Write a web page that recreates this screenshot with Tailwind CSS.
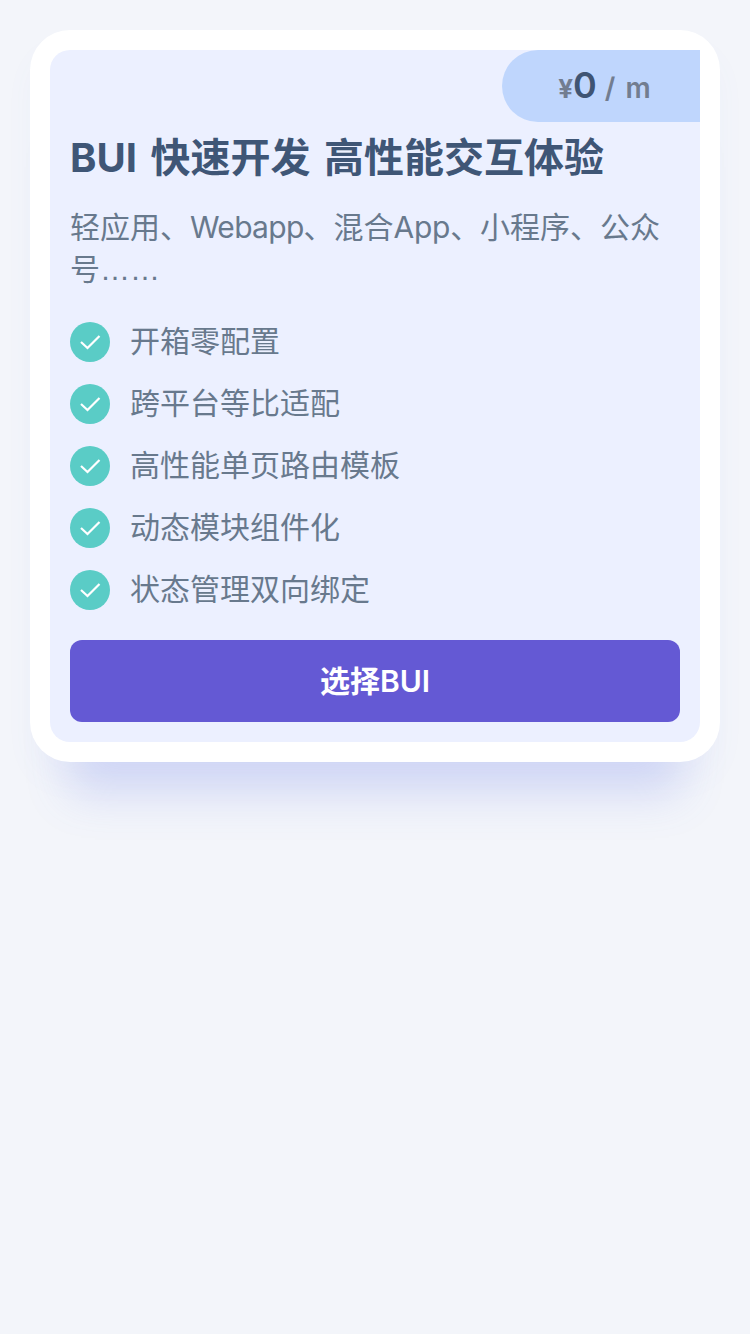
<!DOCTYPE html>
<html lang="zh">
<head>
<meta charset="utf-8">
<script src="https://cdn.jsdelivr.net/npm/@tailwindcss/browser@4"></script>
</head>
<body class="bg-[#f3f5fa] font-['Inter','Noto_Sans_CJK_SC',sans-serif]">
<div class="h-[1334px] w-[750px] pt-[30px] pl-[30px]">
  <div class="w-[690px] rounded-[40px] bg-white p-5 shadow-[0_72px_42px_-40px_rgba(100,116,230,0.21),0_20px_30px_rgba(100,116,230,0.04)]">
    <div class="overflow-hidden rounded-[20px] rounded-tr-none bg-[#ecf0ff]">
      <div class="flex justify-end">
        <div class="flex h-[72px] w-[198px] items-center justify-center rounded-l-full bg-[#bfd6fd] pl-[7px] text-[#727d90]">
          <span class="mt-1 text-[26px] font-bold">¥</span><span class="pb-[2px] text-[36px] leading-none font-semibold text-[#3f5473]">0</span><span class="mt-1 ml-2 text-[28px] font-semibold [word-spacing:3px]">/ m</span>
        </div>
      </div>
      <div class="px-5 pb-5">
        <h1 class="mt-2 text-[40px] leading-[56px] font-bold text-[#3f5676] [word-spacing:4px]">BUI 快速开发 高性能交互体验</h1>
        <p class="mt-[20px] text-[30px] leading-[42px] text-[#68798d]">轻应用、<span class="tracking-[-0.7px]">Webapp</span>、混合<span class="tracking-[-0.3px]">App</span>、小程序、公众号<span class="font-['Liberation_Sans'] leading-none">……</span></p>
        <ul class="mt-[32px] flex flex-col gap-[22px] text-[30px] leading-[40px] text-[#68798d]">
          <li class="flex items-center gap-5"><svg class="size-10" viewBox="0 0 40 40"><circle cx="20" cy="20" r="20" fill="#5accc6"/><path d="M11 20 17.5 26 29.5 14" fill="none" stroke="#fff" stroke-width="2.2"/></svg><span class="pb-[2px] leading-[38px]">开箱零配置</span></li>
          <li class="flex items-center gap-5"><svg class="size-10" viewBox="0 0 40 40"><circle cx="20" cy="20" r="20" fill="#5accc6"/><path d="M11 20 17.5 26 29.5 14" fill="none" stroke="#fff" stroke-width="2.2"/></svg><span class="pb-[2px] leading-[38px]">跨平台等比适配</span></li>
          <li class="flex items-center gap-5"><svg class="size-10" viewBox="0 0 40 40"><circle cx="20" cy="20" r="20" fill="#5accc6"/><path d="M11 20 17.5 26 29.5 14" fill="none" stroke="#fff" stroke-width="2.2"/></svg><span class="pb-[2px] leading-[38px]">高性能单页路由模板</span></li>
          <li class="flex items-center gap-5"><svg class="size-10" viewBox="0 0 40 40"><circle cx="20" cy="20" r="20" fill="#5accc6"/><path d="M11 20 17.5 26 29.5 14" fill="none" stroke="#fff" stroke-width="2.2"/></svg><span class="pb-[2px] leading-[38px]">动态模块组件化</span></li>
          <li class="flex items-center gap-5"><svg class="size-10" viewBox="0 0 40 40"><circle cx="20" cy="20" r="20" fill="#5accc6"/><path d="M11 20 17.5 26 29.5 14" fill="none" stroke="#fff" stroke-width="2.2"/></svg><span class="pb-[2px] leading-[38px]">状态管理双向绑定</span></li>
        </ul>
        <button class="mt-[30px] flex h-[82px] w-full items-center justify-center rounded-[12px] bg-[#6459d4] text-[30px] font-semibold text-white">选择BUI</button>
      </div>
    </div>
  </div>
</div>
</body>
</html>
